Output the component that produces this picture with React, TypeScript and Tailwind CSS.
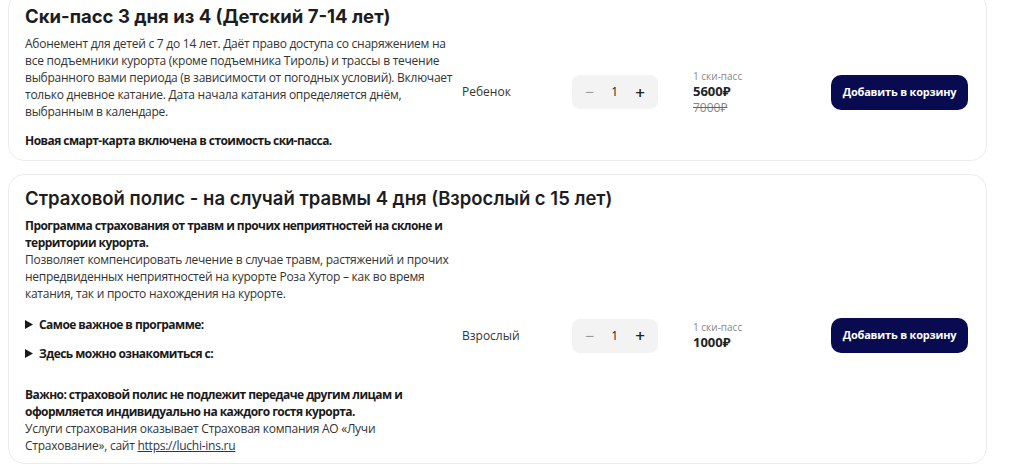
import React from 'react';

const body = { fontFamily: '"Open Sans", "Noto Sans", sans-serif' };
const head = { fontFamily: 'Inter, "Noto Sans", sans-serif' };

const Triangle = () => (
  <svg width="8" height="9" viewBox="0 0 8 9" className="shrink-0">
    <path d="M0 0 L8 4.5 L0 9 Z" fill="#1a1a1a" />
  </svg>
);

interface RowProps {
  label: string;
  price: string;
  oldPrice?: string;
}

const Controls: React.FC<RowProps> = ({ label, price, oldPrice }) => (
  <div className="flex shrink-0 items-center" style={body}>
    <div className="w-[110px] text-[12px] text-[#333]">{label}</div>
    <div className="flex h-[34px] w-[86px] items-center justify-between rounded-[8px] bg-[#f3f3f3] px-[13px] text-[#222]">
      <span className="text-[16px] leading-none text-[#999]">−</span>
      <span className="text-[12px]">1</span>
      <span className="text-[17px] leading-none font-semibold">+</span>
    </div>
    <div className="ml-[35px] flex w-[138px] flex-col">
      <span className="text-[10px] leading-[13px] text-[#888]">1 ски-пасс</span>
      <span className="text-[13px] font-bold leading-[17px] text-[#222]">{price}</span>
      {oldPrice && (
        <span className="text-[12px] leading-[15px] text-[#888] line-through decoration-[#e0303a]">{oldPrice}</span>
      )}
    </div>
    <button className="h-[35px] w-[137px] rounded-[10px] bg-[#080b4f] text-[11px] font-bold tracking-[-0.2px] text-white">
      Добавить в корзину
    </button>
  </div>
);

export default function App() {
  return (
    <div className="min-h-[464px] overflow-hidden bg-white">
      <div className="mt-[-8px] flex w-[987px] flex-col gap-[13px] pl-[8px]">
        <div className="rounded-[16px] border border-[#ececec] bg-white pt-[11px] pr-[17px] pb-[11px] pl-[16px]">
          <h2 className="text-[18.5px] font-bold leading-[24px] text-[#1d1d1f]" style={head}>
            Ски-пасс 3 дня из 4 (Детский 7-14 лет)
          </h2>
          <div className="mt-[7px] flex items-center">
            <div className="w-[437px] shrink-0 text-[12px] leading-[17px] tracking-[-0.25px] text-[#333]" style={body}>
              <p className="w-[433px]">
                Абонемент для детей с 7 до 14 лет. Даёт право доступа со снаряжением на все подъемники курорта
                (кроме подъемника Тироль) и трассы в течение выбранного вами периода (в зависимости от погодных
                условий). Включает только дневное катание. Дата начала катания определяется днём, выбранным в
                календаре.
              </p>
              <p className="mt-[12px] font-bold tracking-[-0.55px] text-[#1a1a1a]">
                Новая смарт-карта включена в стоимость ски-пасса.
              </p>
            </div>
            <Controls label="Ребенок" price="5600₽" oldPrice="7000₽" />
          </div>
        </div>

        <div className="rounded-[16px] border border-[#ececec] bg-white pt-[11px] pr-[17px] pb-[9px] pl-[16px]">
          <h2 className="text-[18.5px] font-semibold leading-[24px] text-[#1d1d1f]" style={head}>
            Страховой полис - на случай травмы 4 дня (Взрослый с 15 лет)
          </h2>
          <div className="mt-[7px] flex items-center">
            <div className="w-[437px] shrink-0 text-[12px] leading-[17px] tracking-[-0.25px] text-[#333]" style={body}>
              <p className="w-[425px]">
                <b className="font-bold tracking-[-0.55px] text-[#1a1a1a]">
                  Программа страхования от травм и прочих неприятностей на склоне и территории курорта.
                </b>
                <br />
                Позволяет компенсировать лечение в случае травм, растяжений и прочих непредвиденных неприятностей
                на курорте Роза Хутор – как во время катания, так и просто нахождения на курорте.
              </p>
              <details className="mt-[14px]">
                <summary className="flex list-none items-center gap-[6px] font-bold tracking-[-0.55px] text-[#1a1a1a]">
                  <Triangle />
                  Самое важное в программе:
                </summary>
              </details>
              <details className="mt-[12px]">
                <summary className="flex list-none items-center gap-[6px] font-bold tracking-[-0.55px] text-[#1a1a1a]">
                  <Triangle />
                  Здесь можно ознакомиться с:
                </summary>
              </details>
              <p className="mt-[24px] w-[390px]">
                <b className="font-bold tracking-[-0.55px] text-[#1a1a1a]">
                  Важно: страховой полис не подлежит передаче другим лицам и оформляется индивидуально на каждого
                  гостя курорта.
                </b>
                <br />
                Услуги страхования оказывает Страховая компания АО «Лучи Страхование», сайт{' '}
                <a href="#" className="text-[#2a3550] underline">https://luchi-ins.ru</a>
              </p>
            </div>
            <Controls label="Взрослый" price="1000₽" />
          </div>
        </div>
      </div>
    </div>
  );
}
